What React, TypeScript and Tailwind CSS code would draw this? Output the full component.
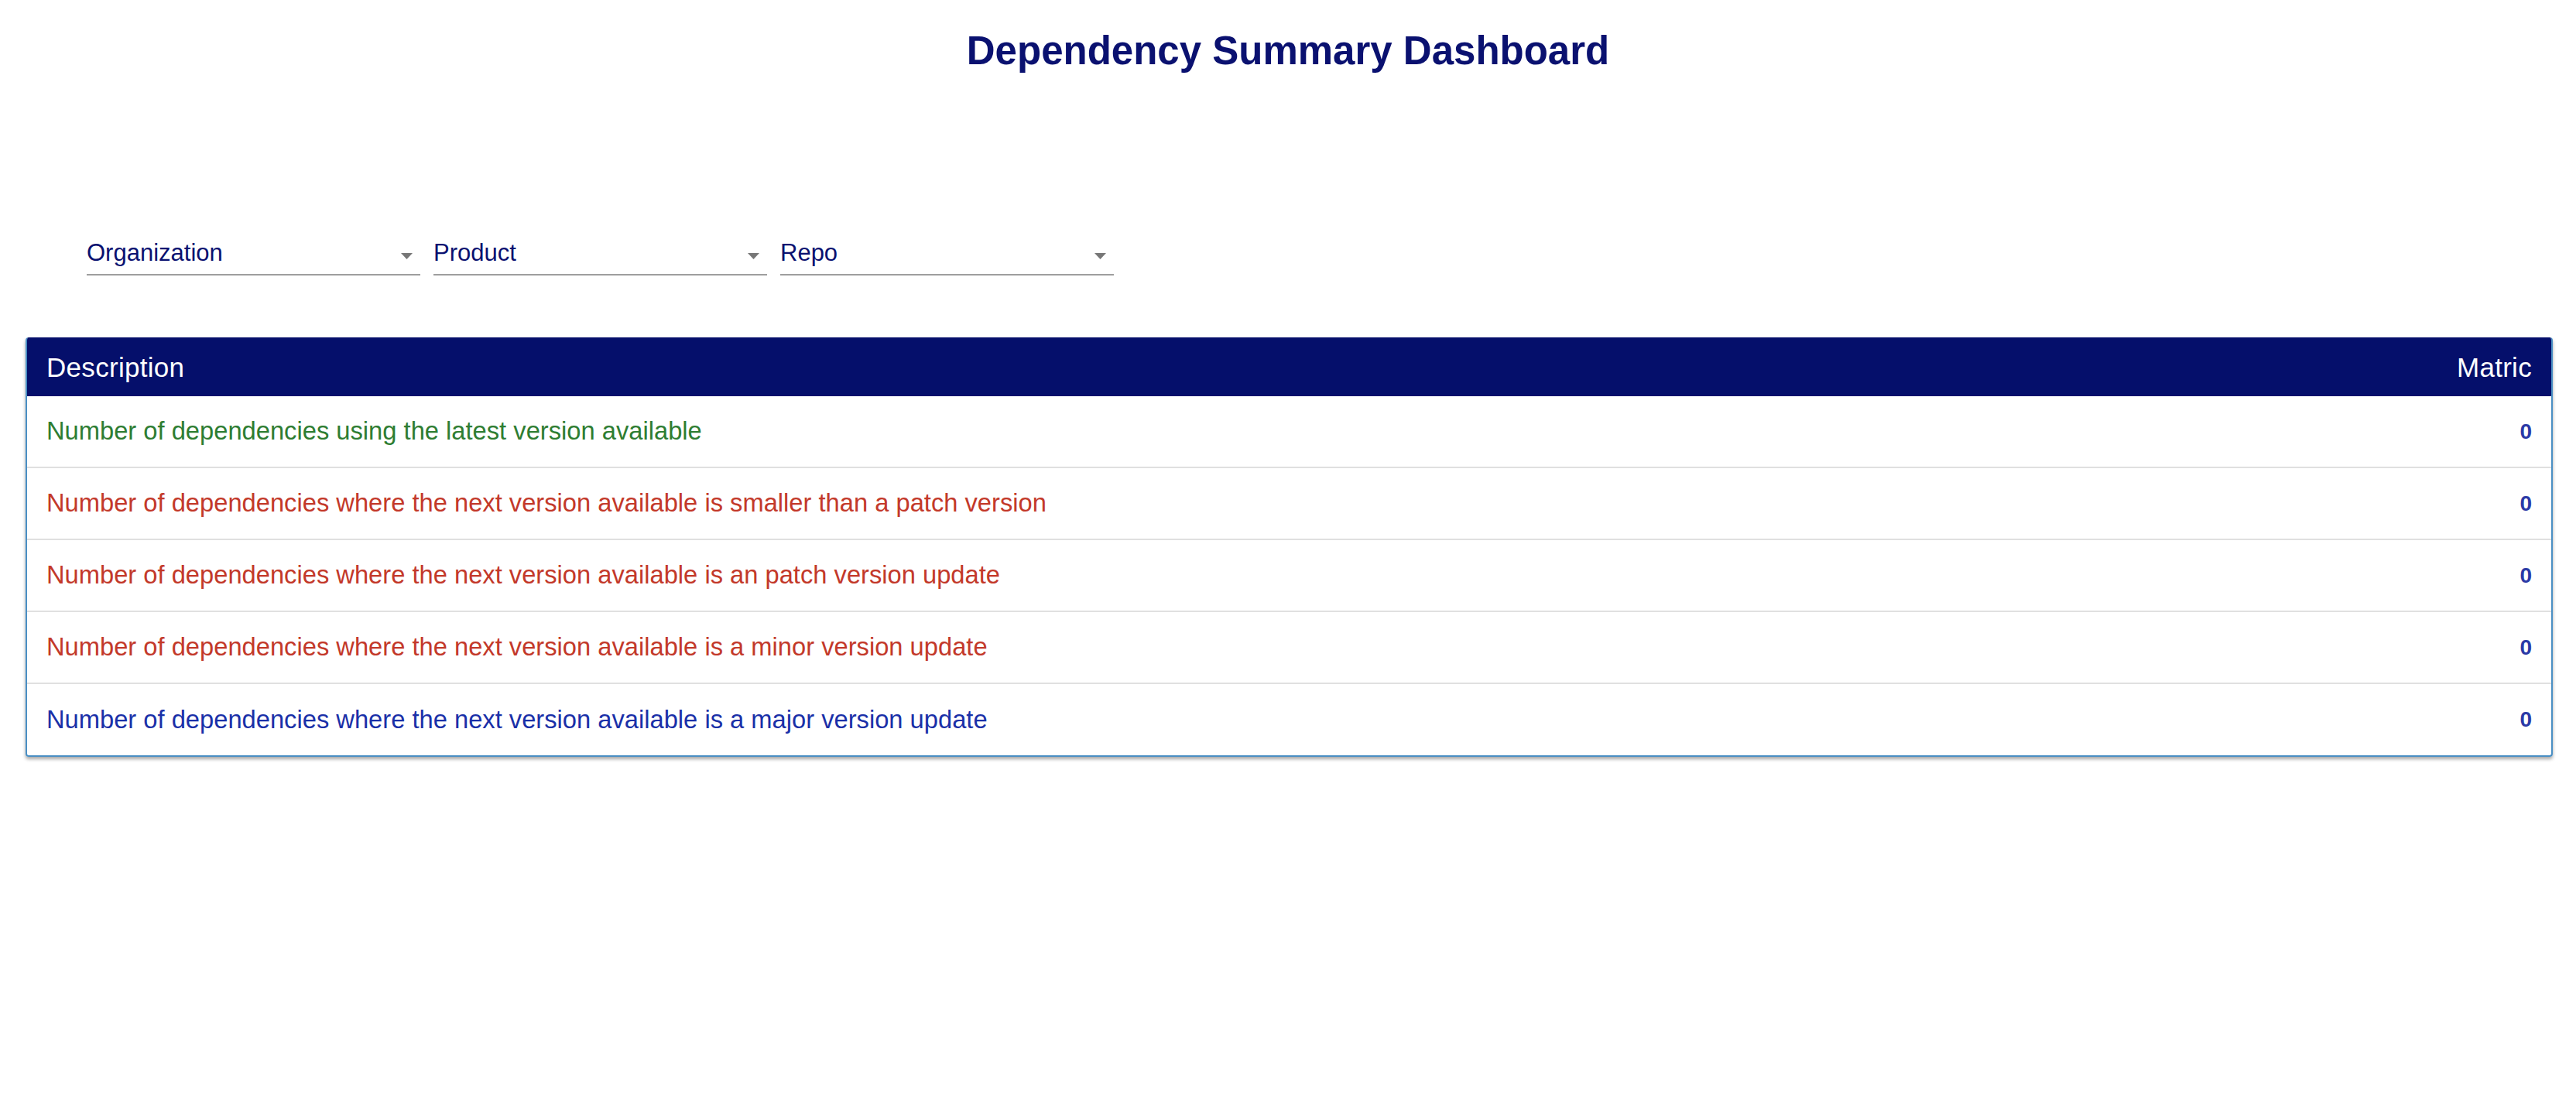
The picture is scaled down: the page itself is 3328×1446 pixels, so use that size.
import React from "react";

const rows = [
  { text: "Number of dependencies using the latest version available", color: "text-[#2e7d32]" },
  { text: "Number of dependencies where the next version available is smaller than a patch version", color: "text-[#c3392a]" },
  { text: "Number of dependencies where the next version available is an patch version update", color: "text-[#c3392a]" },
  { text: "Number of dependencies where the next version available is a minor version update", color: "text-[#c3392a]" },
  { text: "Number of dependencies where the next version available is a major version update", color: "text-[#1a30a8]" },
];

function Select({ label }: { label: string }) {
  return (
    <div className="w-[431px] flex items-start justify-between border-b-2 border-[#9e9e9e] pb-[12px]">
      <span className="text-[31px] leading-none text-[#0a1170]">{label}</span>
      <svg width="15" height="8" viewBox="0 0 15 8" className="mt-[16px] mr-[10px]">
        <polygon points="0,0 15,0 7.5,8" fill="#777777" />
      </svg>
    </div>
  );
}

export default function App() {
  return (
    <div className="min-h-screen bg-white font-['Liberation_Sans',Arial,sans-serif]">
      <div className="pt-[40px] text-center">
        <h1 className="text-[51px] leading-none font-bold text-[#0a1170]">Dependency Summary Dashboard</h1>
      </div>
      <div className="mt-[220px] pl-[112px] flex gap-[17px]">
        <Select label="Organization" />
        <Select label="Product" />
        <Select label="Repo" />
      </div>
      <div className="mt-[80px] ml-[33px] mr-[30px] border-x-2 border-b-2 border-[#4a8fc4] rounded-[4px] overflow-hidden shadow-[0_3px_4px_rgba(0,0,0,0.35)]">
        <div className="h-[76px] bg-[#050f6b] flex items-center justify-between px-[25px] text-white text-[35px] leading-none tracking-[0.3px]">
          <span>Description</span>
          <span>Matric</span>
        </div>
        {rows.map((r, i) => (
          <div
            key={i}
            className={`flex items-center justify-between px-[25px] ${i < rows.length - 1 ? "h-[93px] border-b-2 border-[#e0e0e0]" : "h-[92px]"}`}
          >
            <span className={`text-[32.7px] leading-none ${r.color}`}>{r.text}</span>
            <span className="text-[28px] leading-none font-bold text-[#2b3aa6]">0</span>
          </div>
        ))}
      </div>
    </div>
  );
}
